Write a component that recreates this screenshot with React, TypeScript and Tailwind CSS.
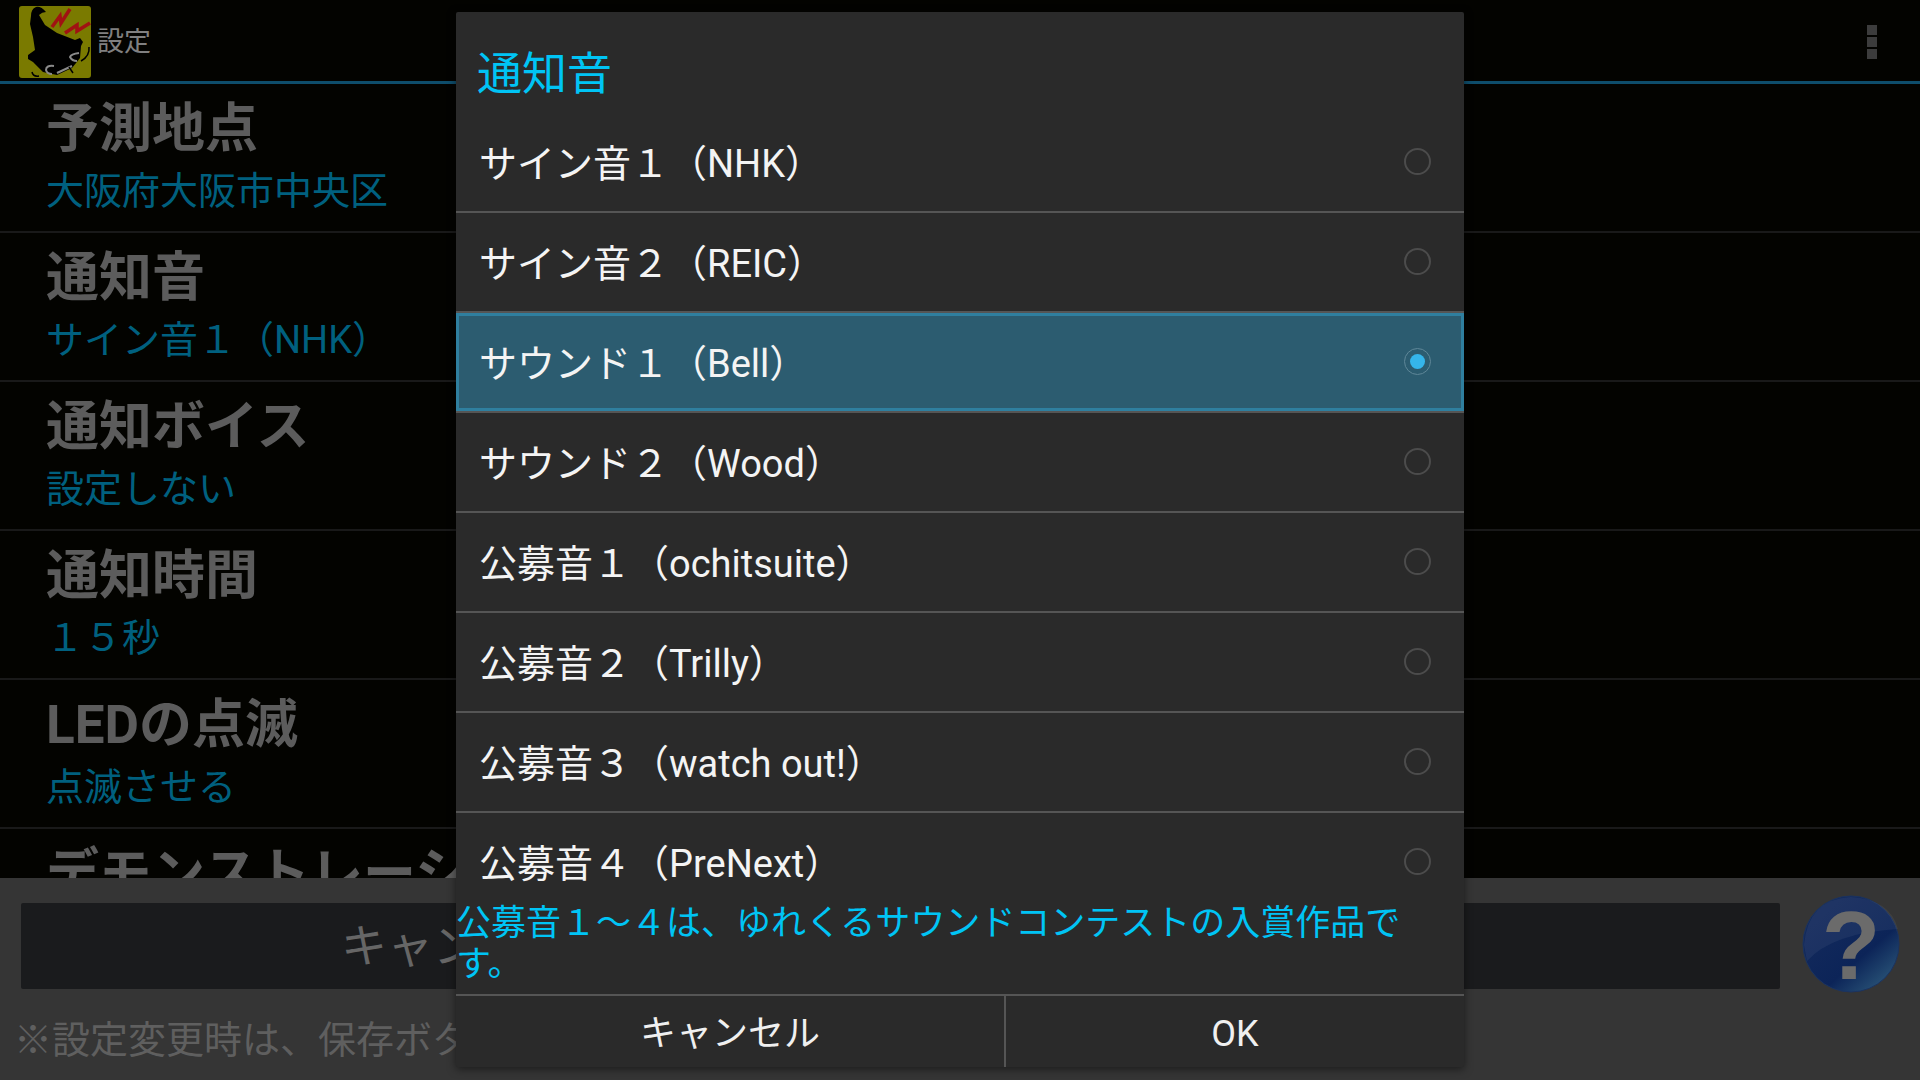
const settings = [
  { title: "予測地点", value: "大阪府大阪市中央区" },
  { title: "通知音", value: "サイン音１（NHK）" },
  { title: "通知ボイス", value: "設定しない" },
  { title: "通知時間", value: "１５秒" },
  { title: "LEDの点滅", value: "点滅させる" },
  { title: "デモンストレーション", value: "" },
];

const sounds = [
  "サイン音１（NHK）",
  "サイン音２（REIC）",
  "サウンド１（Bell）",
  "サウンド２（Wood）",
  "公募音１（ochitsuite）",
  "公募音２（Trilly）",
  "公募音３（watch out!）",
  "公募音４（PreNext）",
];

const AppLogo = () => (
  <svg width="72" height="72" viewBox="0 0 72 72" className="shrink-0">
    <rect width="72" height="72" rx="3" fill="#7a7a00" />
    <path d="M27 6 Q22 0 17 1 Q12 3 12 10 L11 18 L14 31 L16 44 L9 49 L9 53 L14 56 L24 66 L38 69 L53 62 L61 52 L62 40 L64 36 L61 32 L56 34 L38 27 L26 19 L20 9 Q23 6 27 6 Z" fill="#000" />
    <path d="M33 21 L41 10 L42 17 L51 3" fill="none" stroke="#a01212" strokeWidth="3.5" />
    <path d="M46 27 L58 19 L58 25 L71 17" fill="none" stroke="#a01212" strokeWidth="3.5" />
    <path d="M35 60 Q27 59 27 64 Q28 68 33 68 M60 47 Q52 48 51 51 Q53 55 58 55 M38 67 L53 60" fill="none" stroke="#8a8a8a" strokeWidth="2" />
    <path d="M70 41 Q71 50 62 55 M20 70 Q14 71 13 66 M50 61 L54 67" fill="none" stroke="#000" strokeWidth="1.5" />
  </svg>
);

const HelpButton = () => (
  <svg width="98" height="98" viewBox="0 0 98 98" className="shrink-0">
    <defs>
      <linearGradient id="helpBase" x1="0.2" y1="0.2" x2="0.85" y2="0.95">
        <stop offset="0" stopColor="#132a5c" />
        <stop offset="0.6" stopColor="#0c2458" />
        <stop offset="1" stopColor="#2a5578" />
      </linearGradient>
    </defs>
    <circle cx="49" cy="49" r="48" fill="url(#helpBase)" stroke="#1b3360" strokeWidth="1" />
    <path d="M5 66 Q30 38 96 34 Q88 4 49 2 Q6 4 2 50 Z" fill="#ffffff" fillOpacity="0.05" />
    <text x="49" y="84" textAnchor="middle" fontFamily="Liberation Sans" fontWeight="700" fontSize="96" fill="#6b6b6b">?</text>
  </svg>
);

const App = () => {
  return (
    <div className="relative flex h-[1080px] w-[1920px] flex-col overflow-hidden bg-[#030300] font-['Roboto','Noto_Sans_CJK_JP',sans-serif]">
      {/* Action bar */}
      <header className="flex h-[81px] items-center pl-[19px] pr-[43px] pt-[2px]">
        <AppLogo />
        <span className="ml-[6px] pt-[2px] text-[27px] text-[#808080]">設定</span>
        <div className="ml-auto flex flex-col gap-[2px]">
          <div className="h-[10px] w-[10px] bg-[#3c3c3c]" />
          <div className="h-[10px] w-[10px] bg-[#3c3c3c]" />
          <div className="h-[10px] w-[10px] bg-[#3c3c3c]" />
        </div>
      </header>
      <div className="h-[3px] bg-[#0e4d6b]" />

      {/* Settings list, dimmed behind the dialog */}
      <main className="flex-1 overflow-hidden">
        {settings.map((item) => (
          <div key={item.title} className="h-[149px] border-b-2 border-[#191919] pl-[46px] pt-[14px]">
            <div className="text-[53px] font-bold leading-[62px] text-[#5c5c5c]">{item.title}</div>
            <div className="text-[38px] leading-[62px] text-[#00607f]">{item.value}</div>
          </div>
        ))}
      </main>

      {/* Bottom panel */}
      <footer className="h-[202px] bg-[#353535] pl-[21px] pt-[25px]">
        <div className="flex items-start">
          <div className="flex h-[86px] w-[1759px] items-center rounded-[2px] bg-[#1a1b1d] pl-[320px] text-[46px] text-[#666666]">
            キャンセル
          </div>
          <div className="-mt-[8px] ml-[22px]">
            <HelpButton />
          </div>
        </div>
        <p className="-ml-[7px] mt-[22px] text-[38px] leading-[50px] text-[#5f5f5f]">
          ※設定変更時は、保存ボタンを押してください
        </p>
      </footer>

      {/* Dialog */}
      <div className="absolute left-[456px] top-[12px] flex h-[1055px] w-[1008px] flex-col rounded-[2px] bg-[#2a2a2a] shadow-[0_2px_8px_rgba(0,0,0,0.5)]">
        <h2 className="h-[101px] pl-[21px] pt-[33px] text-[45px] leading-[60px] text-[#00c4f5]">通知音</h2>
        <div className="h-[788px] overflow-hidden">
          {sounds.map((sound, index) => {
            const selected = index === 2;
            return (
              <div key={sound} className="h-[100px] border-b-[2px] border-[#555555]">
                <div
                  className={
                    selected
                      ? "flex h-[98px] items-center border-[3px] border-[#2f7f9f] bg-[#2c5c70] pl-[20px] pr-[30px]"
                      : "flex h-[98px] items-center pl-[23px] pr-[33px]"
                  }
                >
                  <span className="pt-[4px] text-[38px] text-[#f4f4f4]">{sound}</span>
                  {selected ? (
                    <div className="-mt-[1px] ml-auto flex h-[27px] w-[27px] items-center justify-center rounded-full border-[1.5px] border-[#5f8798]">
                      <div className="h-[15px] w-[15px] rounded-full bg-[#35b5ea]" />
                    </div>
                  ) : (
                    <div className="-mt-[1px] ml-auto h-[27px] w-[27px] rounded-full border-[2px] border-[#4c4c4c]" />
                  )}
                </div>
              </div>
            );
          })}
        </div>
        <p className="h-[93px] pt-[2px] text-[35px] leading-[41px] text-[#00c4f5]">
          公募音１～４は、ゆれくるサウンドコンテストの入賞作品です。
        </p>
        <div className="flex flex-1 border-t-[2px] border-[#555555] text-[36px] text-[#f0f0f0]">
          <div className="flex w-[550px] items-center justify-center border-r-[2px] border-[#555555] pt-[4px]">キャンセル</div>
          <div className="flex flex-1 items-center justify-center pt-[4px]">OK</div>
        </div>
      </div>
    </div>
  );
};

export default App;
